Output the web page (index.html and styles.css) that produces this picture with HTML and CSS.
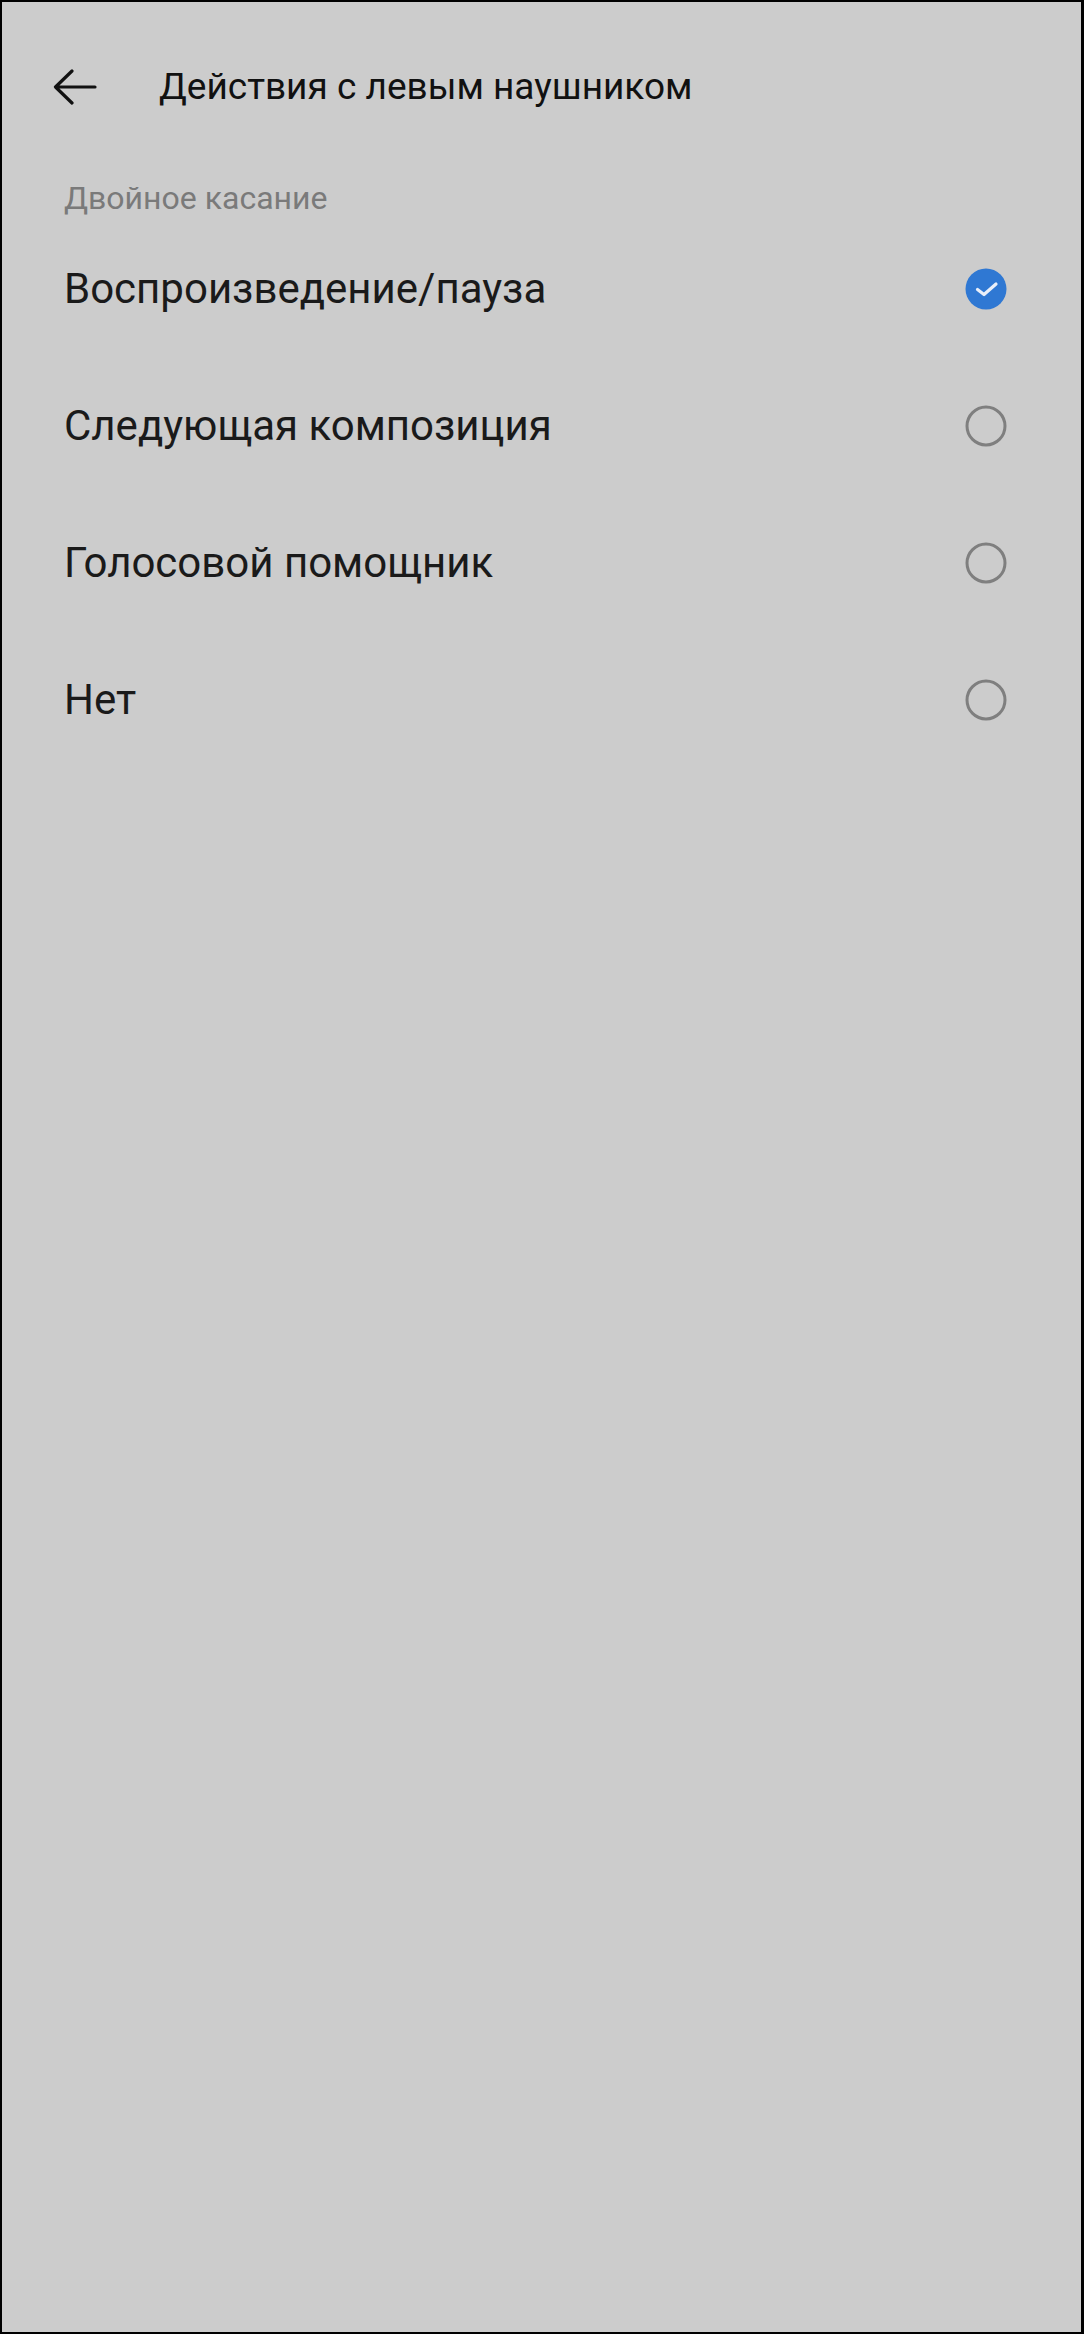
FILE: index.html
```html
<!DOCTYPE html>
<html lang="ru">
<head>
<meta charset="utf-8">
<title>Действия с левым наушником</title>
<link rel="stylesheet" href="styles.css">
</head>
<body>
<div class="screen">
  <header class="header">
    <svg class="back" width="44" height="36" viewBox="0 0 44 36">
      <path d="M42 18 H3 M19 2 L2.5 18 L19 34" fill="none" stroke="#111" stroke-width="3.2" stroke-linecap="round" stroke-linejoin="round"/>
    </svg>
    <h1 class="title">Действия с левым наушником</h1>
  </header>
  <div class="section-label">Двойное касание</div>
  <ul class="options">
    <li class="option">
      <span class="option-text">Воспроизведение/пауза</span>
      <svg class="radio" width="42" height="42" viewBox="0 0 42 42">
        <circle cx="21" cy="21" r="20.5" fill="#2f78d3"/>
        <path d="M12.5 21.5 L19 26.5 L31 16" fill="none" stroke="#e9eff9" stroke-width="3.2" stroke-linecap="round" stroke-linejoin="round"/>
      </svg>
    </li>
    <li class="option">
      <span class="option-text">Следующая композиция</span>
      <svg class="radio" width="42" height="42" viewBox="0 0 42 42">
        <circle cx="21" cy="21" r="19" fill="none" stroke="#7f7f7f" stroke-width="3"/>
      </svg>
    </li>
    <li class="option">
      <span class="option-text">Голосовой помощник</span>
      <svg class="radio" width="42" height="42" viewBox="0 0 42 42">
        <circle cx="21" cy="21" r="19" fill="none" stroke="#7f7f7f" stroke-width="3"/>
      </svg>
    </li>
    <li class="option">
      <span class="option-text">Нет</span>
      <svg class="radio" width="42" height="42" viewBox="0 0 42 42">
        <circle cx="21" cy="21" r="19" fill="none" stroke="#7f7f7f" stroke-width="3"/>
      </svg>
    </li>
  </ul>
</div>
</body>
</html>
```

FILE: styles.css
```css
* {
  box-sizing: border-box;
}

html, body {
  margin: 0;
  padding: 0;
  background: #000;
}

body {
  font-family: Roboto, "Noto Sans", "Liberation Sans", sans-serif;
}

.screen {
  width: 1084px;
  height: 2334px;
  background: #cccccc;
  border-style: solid;
  border-color: #000;
  border-width: 2px 3px 2px 2px;
}

.header {
  height: 170px;
  display: flex;
  align-items: center;
  padding-left: 51px;
}

.back {
  display: block;
  flex: none;
}

.title {
  margin: 0 0 0 62px;
  font-size: 37px;
  font-weight: 400;
  color: #111;
  line-height: 44px;
}

.section-label {
  margin-top: 6px;
  height: 40px;
  line-height: 40px;
  font-size: 32px;
  color: #7a7a7a;
  padding-left: 62px;
}

.options {
  list-style: none;
  margin: 0;
  padding: 2px 0 0 0;
}

.option {
  height: 137px;
  display: flex;
  align-items: center;
  justify-content: space-between;
  padding: 0 74px 0 62px;
}

.option-text {
  font-size: 42px;
  color: #1a1a1a;
  line-height: 52px;
}

.radio {
  display: block;
  flex: none;
}
```
